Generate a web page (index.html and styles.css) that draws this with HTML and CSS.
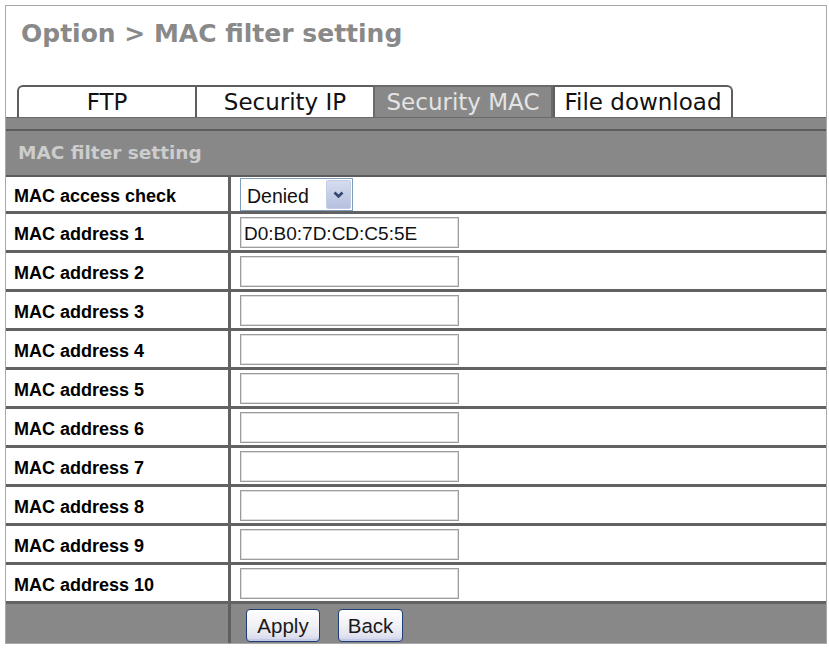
FILE: index.html
```html
<!DOCTYPE html>
<html lang="en">
<head>
<meta charset="utf-8">
<title>Option &gt; MAC filter setting</title>
<link rel="stylesheet" href="styles.css">
</head>
<body>
<div class="frame">
  <h1 class="title">Option &gt; MAC filter setting</h1>
  <div class="tabs">
    <div class="tab tab-first">FTP</div>
    <div class="tab">Security IP</div>
    <div class="tab tab-active">Security MAC</div>
    <div class="tab tab-last">File download</div>
  </div>
  <div class="band"></div>
  <div class="head">MAC filter setting</div>
  <div class="form">
    <div class="row row-first">
      <div class="label">MAC access check</div>
      <div class="value">
        <div class="select">
          <span class="select-text">Denied</span>
          <span class="select-btn"><svg width="11" height="8" viewBox="0 0 11 8"><polyline points="1.5,1.5 5.5,5.5 9.5,1.5" fill="none" stroke="#33466e" stroke-width="2.6"/></svg></span>
        </div>
      </div>
    </div>
    <div class="row"><div class="label">MAC address 1</div><div class="value"><input class="field" type="text" value="D0:B0:7D:CD:C5:5E"></div></div>
    <div class="row"><div class="label">MAC address 2</div><div class="value"><input class="field" type="text" value=""></div></div>
    <div class="row"><div class="label">MAC address 3</div><div class="value"><input class="field" type="text" value=""></div></div>
    <div class="row"><div class="label">MAC address 4</div><div class="value"><input class="field" type="text" value=""></div></div>
    <div class="row"><div class="label">MAC address 5</div><div class="value"><input class="field" type="text" value=""></div></div>
    <div class="row"><div class="label">MAC address 6</div><div class="value"><input class="field" type="text" value=""></div></div>
    <div class="row"><div class="label">MAC address 7</div><div class="value"><input class="field" type="text" value=""></div></div>
    <div class="row"><div class="label">MAC address 8</div><div class="value"><input class="field" type="text" value=""></div></div>
    <div class="row"><div class="label">MAC address 9</div><div class="value"><input class="field" type="text" value=""></div></div>
    <div class="row"><div class="label">MAC address 10</div><div class="value"><input class="field" type="text" value=""></div></div>
    <div class="row row-actions">
      <div class="label"></div>
      <div class="value actions">
        <button class="btn btn-apply" type="button">Apply</button>
        <button class="btn btn-back" type="button">Back</button>
      </div>
    </div>
  </div>
</div>
</body>
</html>
```
FILE: styles.css
```css
* { box-sizing: border-box; }
html, body { margin: 0; padding: 0; background: #ffffff; }
body { font-family: "Liberation Sans", Arial, sans-serif; }

.frame {
  margin: 5px 0 0 5px;
  width: 822px;
  border: 1px solid #a8a8a8;
  display: flex;
  flex-direction: column;
}

.title {
  margin: 0;
  padding: 13px 0 0 15px;
  height: 79px;
  font-family: "DejaVu Sans", Verdana, sans-serif;
  font-weight: bold;
  font-size: 25px;
  line-height: 30px;
  color: #898989;
}

.tabs {
  display: flex;
  align-items: flex-end;
  padding-left: 11px;
  height: 32px;
}
.tab {
  width: 180px;
  height: 32px;
  margin-right: -2px;
  border: 2px solid #5e5e5e;
  border-bottom: none;
  background: #ffffff;
  font-family: "DejaVu Sans", Verdana, sans-serif;
  font-size: 23px;
  line-height: 30px;
  text-align: center;
  color: #111111;
  white-space: nowrap;
}
.tab-first { border-top-left-radius: 6px; }
.tab-last { border-top-right-radius: 6px; margin-left: 2px; }
.tab-active {
  background: #888888;
  border-color: #6a6a6a;
  color: #e4e4e4;
}

.band {
  height: 14px;
  background: #888888;
  border-top: 1px solid #6a6a6a;
  border-bottom: 2px solid #5c5c5c;
}

.head {
  height: 46px;
  background: #888888;
  border-bottom: 2px solid #5c5c5c;
  padding-left: 12px;
  font-family: "DejaVu Sans", Verdana, sans-serif;
  font-weight: bold;
  font-size: 18.5px;
  line-height: 44px;
  color: #cdcdcd;
}

.form { display: flex; flex-direction: column; }
.row {
  display: flex;
  height: 39px;
  border-bottom: 3px solid #626262;
}
.row-first { height: 37px; }
.label {
  width: 225px;
  flex: none;
  border-right: 3px solid #626262;
  padding: 5px 0 0 8px;
  display: flex;
  align-items: center;
  font-weight: bold;
  font-size: 18px;
  color: #000000;
}
.value {
  flex: 1;
  display: flex;
  align-items: center;
  padding-left: 9px;
}

.field {
  width: 219px;
  height: 31px;
  margin: 1px 0 0 0;
  border: 1px solid #9c9c9c;
  box-shadow: inset 0 0 0 1px #dedede;
  padding: 3px 0 0 3px;
  font-family: "Liberation Sans", Arial, sans-serif;
  font-size: 19px;
  color: #111111;
  background: #ffffff;
  outline: none;
}

.select {
  width: 113px;
  height: 33px;
  margin-top: 1px;
  border: 1px solid #7f9db9;
  background: #ffffff;
  display: flex;
  align-items: center;
  justify-content: space-between;
  padding: 1px;
}
.select-text {
  padding: 3px 0 0 5px;
  font-size: 19.5px;
  color: #111111;
}
.select-btn {
  width: 25px;
  height: 100%;
  border: 1px solid #c3cde6;
  border-radius: 2px;
  background: linear-gradient(#d6dcef, #b6c0df);
  display: flex;
  align-items: center;
  justify-content: center;
}

.row-actions {
  height: 39px;
  border-bottom: none;
  background: #888888;
}
.row-actions .label { border-right-color: #5f5f5f; }
.actions {
  padding-left: 15px;
  gap: 18px;
  align-items: flex-start;
  padding-top: 5px;
}
.btn {
  height: 33px;
  border: 1px solid #1f3e76;
  border-radius: 4px;
  background: linear-gradient(#ffffff 0%, #f2f2f7 45%, #e3e4ef 80%, #cfd3ea 100%);
  box-shadow: inset 0 -2px 0 #c4cae6, inset 0 1px 0 #ffffff;
  font-family: "Liberation Sans", Arial, sans-serif;
  font-size: 20.5px;
  color: #1a1a1a;
  padding: 0;
}
.btn-apply { width: 74px; }
.btn-back { width: 65px; }
```
